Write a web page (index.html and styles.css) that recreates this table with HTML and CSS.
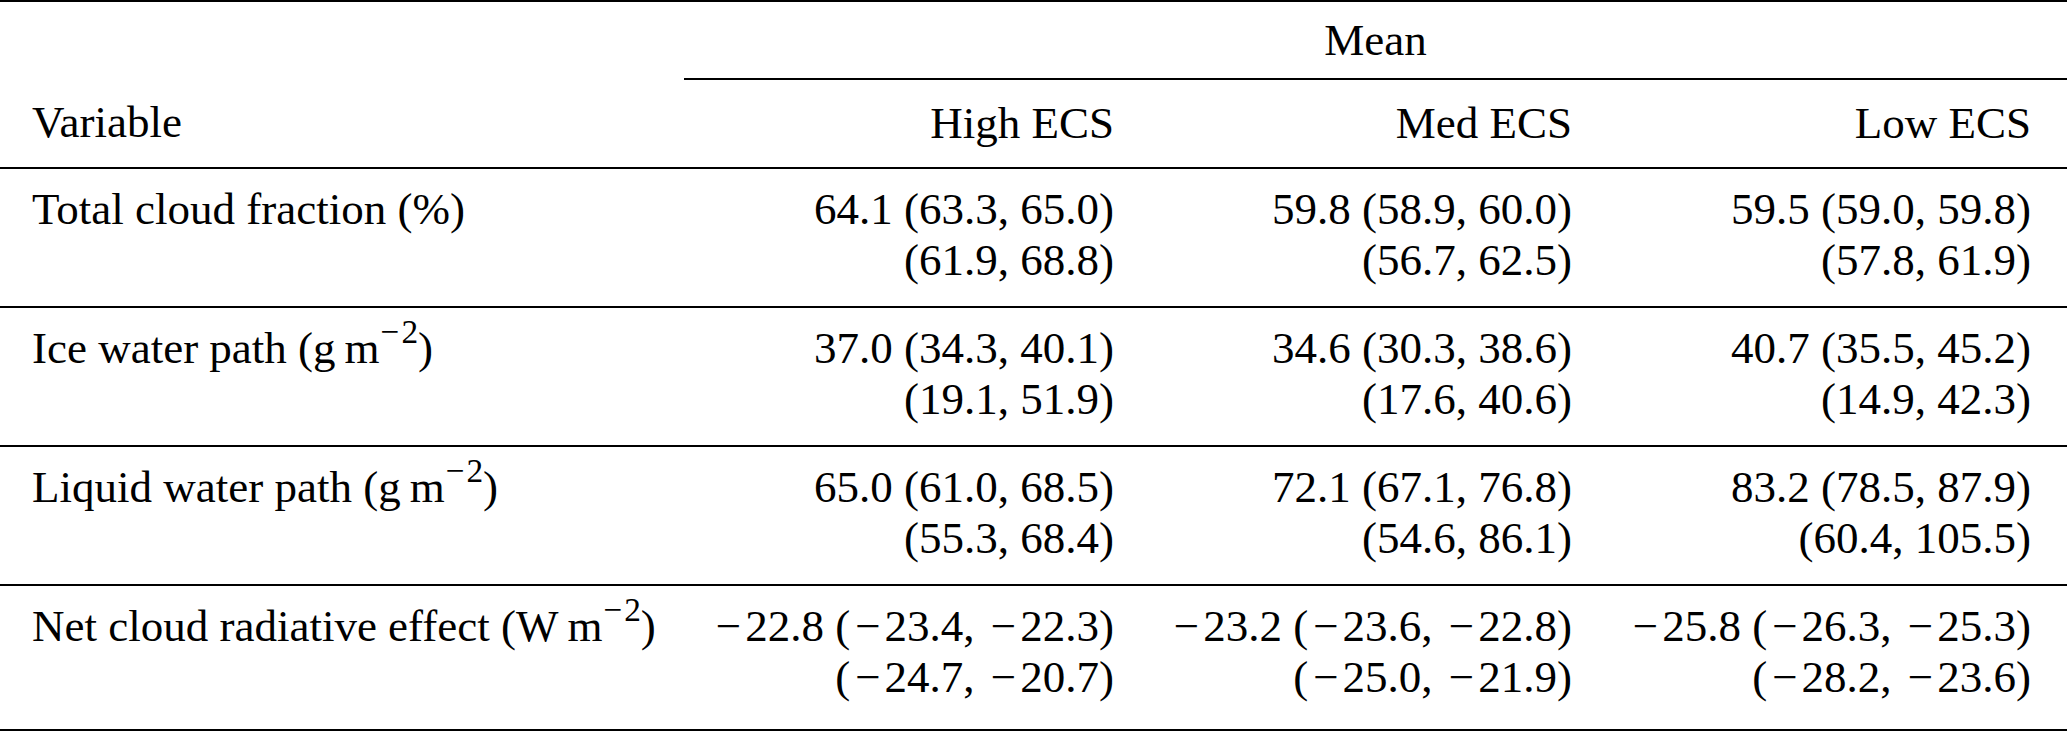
FILE: index.html
```html
<!DOCTYPE html>
<html lang="en">
<head>
<meta charset="utf-8">
<title>Cloud variables by ECS group</title>
<link rel="stylesheet" href="styles.css">
</head>
<body>
<table class="data">
  <colgroup>
    <col class="c-var">
    <col class="c-high">
    <col class="c-med">
    <col class="c-low">
  </colgroup>
  <thead>
    <tr class="group-row">
      <th class="blank"></th>
      <th class="group" colspan="3">Mean</th>
    </tr>
    <tr class="head-row">
      <th class="var">Variable</th>
      <th class="num">High ECS</th>
      <th class="num">Med ECS</th>
      <th class="num">Low ECS</th>
    </tr>
  </thead>
  <tbody>
    <tr>
      <td class="var">Total cloud fraction (%)</td>
      <td class="num">64.1 (63.3, 65.0)<br>(61.9, 68.8)</td>
      <td class="num">59.8 (58.9, 60.0)<br>(56.7, 62.5)</td>
      <td class="num">59.5 (59.0, 59.8)<br>(57.8, 61.9)</td>
    </tr>
    <tr>
      <td class="var">Ice water path (g&#8201;m<sup><span class="mn">&minus;</span>2</sup>)</td>
      <td class="num">37.0 (34.3, 40.1)<br>(19.1, 51.9)</td>
      <td class="num">34.6 (30.3, 38.6)<br>(17.6, 40.6)</td>
      <td class="num">40.7 (35.5, 45.2)<br>(14.9, 42.3)</td>
    </tr>
    <tr>
      <td class="var">Liquid water path (g&#8201;m<sup><span class="mn">&minus;</span>2</sup>)</td>
      <td class="num">65.0 (61.0, 68.5)<br>(55.3, 68.4)</td>
      <td class="num">72.1 (67.1, 76.8)<br>(54.6, 86.1)</td>
      <td class="num">83.2 (78.5, 87.9)<br>(60.4, 105.5)</td>
    </tr>
    <tr class="last">
      <td class="var">Net cloud radiative effect (W&#8201;m<sup><span class="mn">&minus;</span>2</sup>)</td>
      <td class="num"><span class="mn">&minus;</span>22.8 (<span class="mn">&minus;</span>23.4, <span class="mn">&minus;</span>22.3)<br>(<span class="mn">&minus;</span>24.7, <span class="mn">&minus;</span>20.7)</td>
      <td class="num"><span class="mn">&minus;</span>23.2 (<span class="mn">&minus;</span>23.6, <span class="mn">&minus;</span>22.8)<br>(<span class="mn">&minus;</span>25.0, <span class="mn">&minus;</span>21.9)</td>
      <td class="num"><span class="mn">&minus;</span>25.8 (<span class="mn">&minus;</span>26.3, <span class="mn">&minus;</span>25.3)<br>(<span class="mn">&minus;</span>28.2, <span class="mn">&minus;</span>23.6)</td>
    </tr>
  </tbody>
</table>
</body>
</html>
```

FILE: styles.css
```css
html, body {
  margin: 0;
  padding: 0;
  background: #ffffff;
}

.data {
  width: 2067px;
  border-collapse: collapse;
  table-layout: fixed;
  font-family: "Liberation Serif", "Times New Roman", serif;
  font-size: 45px;
  line-height: 51px;
  color: #000000;
  border-top: 2px solid #000000;
  border-bottom: 2px solid #000000;
}

.c-var { width: 684px; }
.c-high { width: 462px; }
.c-med { width: 458px; }
.c-low { width: 463px; }

.data th,
.data td {
  font-weight: normal;
  padding: 0;
  vertical-align: top;
  white-space: nowrap;
}

.group-row th {
  padding-top: 13px;
  padding-bottom: 12px;
}

.group {
  text-align: center;
  border-bottom: 2px solid #000000;
}

.head-row th {
  padding-top: 18px;
  padding-bottom: 18px;
  border-bottom: 2px solid #000000;
}

.var {
  text-align: left;
  padding-left: 32px !important;
}

.num {
  text-align: right;
  padding-right: 32px !important;
}

.data tr > .num:last-child {
  padding-right: 36px !important;
}

.data tbody td {
  padding-top: 15px;
  padding-bottom: 20px;
  border-bottom: 2px solid #000000;
}

.data tbody tr.last td {
  padding-bottom: 26px;
}

.mn {
  display: inline-block;
  margin: 0 4px 0 5px;
}

sup {
  font-size: 0.74em;
  line-height: 0;
  vertical-align: 0.6em;
}

sup .mn {
  margin: 0 2px 0 1px;
}
```
